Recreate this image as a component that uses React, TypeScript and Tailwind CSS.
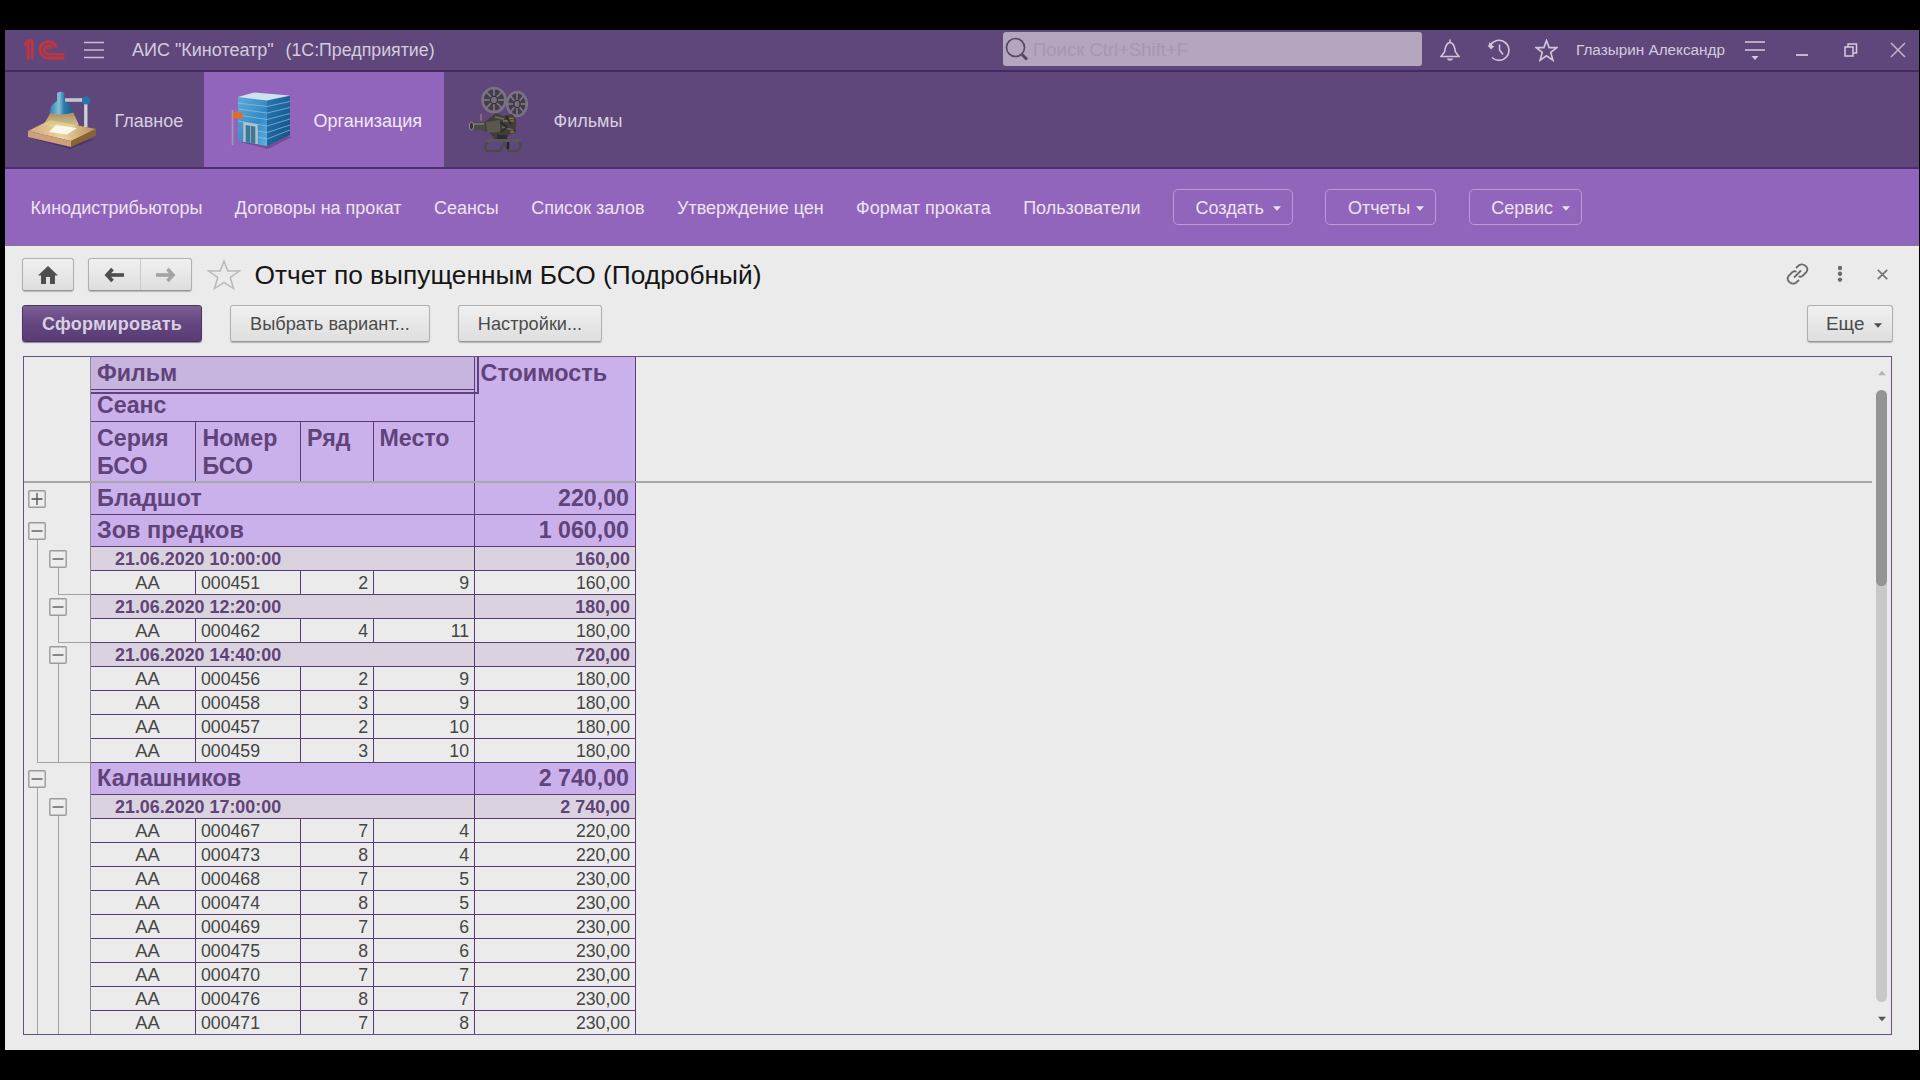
import type { ReactNode } from 'react';

type Row =
  | { kind: 'film'; title: string; sum: string; open: boolean }
  | { kind: 'show'; title: string; sum: string }
  | { kind: 'seat'; num: string; row: string; place: string; sum: string; end?: 'show' | 'film' };

const seat = (num: string, row: string, place: string, sum: string, end?: 'show' | 'film'): Row => ({
  kind: 'seat',
  num,
  row,
  place,
  sum,
  end,
});

const rows: Row[] = [
  { kind: 'film', title: 'Бладшот', sum: '220,00', open: false },
  { kind: 'film', title: 'Зов предков', sum: '1 060,00', open: true },
  { kind: 'show', title: '21.06.2020 10:00:00', sum: '160,00' },
  seat('000451', '2', '9', '160,00', 'show'),
  { kind: 'show', title: '21.06.2020 12:20:00', sum: '180,00' },
  seat('000462', '4', '11', '180,00', 'show'),
  { kind: 'show', title: '21.06.2020 14:40:00', sum: '720,00' },
  seat('000456', '2', '9', '180,00'),
  seat('000458', '3', '9', '180,00'),
  seat('000457', '2', '10', '180,00'),
  seat('000459', '3', '10', '180,00', 'film'),
  { kind: 'film', title: 'Калашников', sum: '2 740,00', open: true },
  { kind: 'show', title: '21.06.2020 17:00:00', sum: '2 740,00' },
  seat('000467', '7', '4', '220,00'),
  seat('000473', '8', '4', '220,00'),
  seat('000468', '7', '5', '230,00'),
  seat('000474', '8', '5', '230,00'),
  seat('000469', '7', '6', '230,00'),
  seat('000475', '8', '6', '230,00'),
  seat('000470', '7', '7', '230,00'),
  seat('000476', '8', '7', '230,00'),
  seat('000471', '7', '8', '230,00'),
];

function Logo() {
  return (
    <svg className="h-[22px] w-[42px]" viewBox="23 39 42 22" fill="none" stroke="#c0363f" strokeWidth="2.8">
      <path d="M24 45 L28.200 41.600 V59.500" />
      <path d="M27.500 40.800 H32.300 V59.500" />
      <path d="M56.300 47.500 A8.300 8.300 0 1 0 48 58 H64.500" />
      <path d="M52.400 48.200 A4.300 4.300 0 1 0 48 54.200 H64.500" strokeWidth="2.4" />
      <path d="M46.600 50.200 a1.800 1.800 0 1 1 3.200 0" strokeWidth="1.2" />
    </svg>
  );
}

function LampIcon() {
  return (
    <svg className="h-[62px] w-[70px]" viewBox="27 88 70 62">
      <defs>
        <linearGradient id="cone" x1="0" y1="0" x2="0" y2="1">
          <stop offset="0" stopColor="#b8975c" />
          <stop offset="1" stopColor="#ecdf9f" />
        </linearGradient>
        <linearGradient id="shade" x1="0" y1="0" x2="1" y2="0">
          <stop offset="0" stopColor="#2b7fad" />
          <stop offset="0.4" stopColor="#86bfd8" />
          <stop offset="0.6" stopColor="#2b7dab" />
          <stop offset="1" stopColor="#185a8a" />
        </linearGradient>
        <linearGradient id="wood" x1="0" y1="0" x2="1" y2="0">
          <stop offset="0" stopColor="#d3a67c" />
          <stop offset="0.5" stopColor="#ecd49c" />
          <stop offset="1" stopColor="#b88d5a" />
        </linearGradient>
      </defs>
      <path d="M30 137 L70 148 L95 138 L70 142Z" fill="#3f2b55" opacity="0.6" />
      <path d="M28 130 L50 119 L96 128 L71 140Z" fill="url(#wood)" />
      <path d="M28 130 L71 140 V146 L28 136Z" fill="#cba07a" />
      <path d="M71 140 L96 128 V134.500 L71 146Z" fill="#8a6335" />
      <path d="M51 111 H73 L79 124 Q62 131 44 123Z" fill="url(#cone)" opacity="0.85" />
      <path d="M49 131 L56 124 L77 127 L67 133.500Z" fill="#f8f8ec" />
      <path d="M65 99 H84" stroke="#c3c3d2" strokeWidth="3.600" />
      <path d="M86 103 V126" stroke="#cfcedb" strokeWidth="3.800" />
      <path d="M87.500 103 V126" stroke="#8e8aa0" strokeWidth="1" />
      <circle cx="86" cy="99.500" r="4" fill="#2577a8" />
      <path d="M57 92 Q61 89.500 64.500 92 V100 Q72 104 73.500 111.500 Q61 115.500 49.500 111.500 Q50 104 57 100Z" fill="url(#shade)" />
    </svg>
  );
}

function BuildingIcon() {
  return (
    <svg className="h-[60px] w-[62px]" viewBox="230 89 62 60">
      <defs>
        <linearGradient id="front" x1="0" y1="0" x2="1" y2="1">
          <stop offset="0" stopColor="#62a9d8" />
          <stop offset="0.6" stopColor="#3489c4" />
          <stop offset="1" stopColor="#64b3de" />
        </linearGradient>
        <linearGradient id="side" x1="0" y1="0" x2="1" y2="1">
          <stop offset="0" stopColor="#2877b2" />
          <stop offset="1" stopColor="#154f83" />
        </linearGradient>
      </defs>
      <path d="M240 141 L268 148 L292 136 L280 134Z" fill="#5b3b80" opacity="0.55" />
      <path d="M238 96 L267 99 V145 L238 140Z" fill="url(#front)" />
      <path d="M267 99 L290 95 V134 L267 145Z" fill="url(#side)" />
      <path d="M238 96 L254 91.500 L290 94.500 L267 99.500Z" fill="#cfe3ee" />
      <g stroke="#8cc8e8" strokeWidth="0.900" fill="none" opacity="0.75">
        <path d="M238 102 L267 105.500 L290 100.500" />
        <path d="M238 108 L267 112 L290 106.500" />
        <path d="M238 114 L267 118.500 L290 112.500" />
        <path d="M238 120 L267 125 L290 118" />
        <path d="M257 130 L267 131.500 L290 124" />
        <path d="M257 136 L267 138 L290 129" />
      </g>
      <path d="M244.500 141 V122.500 L256.500 124.500 V143" fill="#3f7797" stroke="#b3c3cf" strokeWidth="2.400" />
      <path d="M250.500 125 V142" stroke="#86a9bb" strokeWidth="1" />
      <path d="M232.500 109 V144" stroke="#a795b8" strokeWidth="1.600" />
      <path d="M233 111 Q237 109.500 242.500 112 V118 Q238 116.500 233 118Z" fill="#dd6c30" />
    </svg>
  );
}

function Reel({ cx, cy, rx, ry }: { cx: number; cy: number; rx: number; ry: number }) {
  return (
    <g>
      <ellipse cx={cx} cy={cy} rx={rx} ry={ry} fill="#443d48" stroke="#7a7183" strokeWidth="2.6" />
      <g stroke="#7d7586" strokeWidth="1.7">
        <path d={`M${cx - rx} ${cy} H${cx + rx}`} />
        <path d={`M${cx} ${cy - ry} V${cy + ry}`} />
        <path d={`M${cx - rx * 0.7} ${cy - ry * 0.7} L${cx + rx * 0.7} ${cy + ry * 0.7}`} />
        <path d={`M${cx - rx * 0.7} ${cy + ry * 0.7} L${cx + rx * 0.7} ${cy - ry * 0.7}`} />
      </g>
      <ellipse cx={cx} cy={cy} rx={rx * 0.32} ry={ry * 0.32} fill="#77707c" stroke="#2c2830" strokeWidth="1" />
    </g>
  );
}

function ProjectorIcon() {
  return (
    <svg className="h-[68px] w-[62px]" viewBox="468 85 62 68">
      <Reel cx={494} cy={99} rx={11.5} ry={12} />
      <Reel cx={517} cy={103} rx={9.8} ry={12} />
      <path d="M481 113 V120" stroke="#a4728f" strokeWidth="1.400" />
      <path d="M491 116 L496 112 L503 115 L512 113 L516 118 V131 L509 134 L506 138 H494 L491 133 L485 130 V121Z" fill="#403d3a" />
      <path d="M486 121 L500 119 V131 L487 132Z" fill="#59584f" />
      <path d="M471 121.500 L485 120.500 V130 L471 128.500Z" fill="#4c4b47" />
      <path d="M474 123 H484" stroke="#7f7d73" strokeWidth="1.500" />
      <ellipse cx="471.500" cy="125" rx="2.200" ry="4" fill="#35323a" stroke="#a9a3ac" strokeWidth="0.800" />
      <path d="M503 120 H514 M502 126 L513 129 M495 116 L504 118" stroke="#6a6657" strokeWidth="1.800" />
      <path d="M500 121 L507 126 L501 131 M506 115 L511 123" stroke="#29272a" strokeWidth="1.600" fill="none" />
      <path d="M509 117.500 h5 M510 131 h4" stroke="#94702f" strokeWidth="1.400" />
      <path d="M497 134 H507 V139 H497Z" fill="#2d2b2d" />
      <path d="M485 139.500 H521" stroke="#5a5757" strokeWidth="3.200" />
      <path d="M487 141 Q483 147 487 150 H500 L504 142 L509 150 H518 Q523 145 519 141" fill="none" stroke="#4c494d" strokeWidth="2.400" />
      <path d="M508 141 V148" stroke="#242226" strokeWidth="2.400" />
    </svg>
  );
}

function Star({ className, stroke, width }: { className: string; stroke: string; width: number }) {
  return (
    <svg className={className} viewBox="0 0 24 24" preserveAspectRatio="none" fill="none" stroke={stroke} strokeWidth={width}>
      <path d="M12 1.500 L14.700 9 H22.800 L16.400 13.900 L18.700 22.200 L12 17.500 L5.300 22.200 L7.600 13.900 L1.200 9 H9.300 Z" />
    </svg>
  );
}

function TitleBar() {
  return (
    <header className="flex h-[42px] shrink-0 items-center border-b-2 border-[#432a60] pl-[18px] text-[#d5cbdd]">
      <Logo />
      <svg className="ml-[18px] h-[18px] w-[22px]" viewBox="0 0 22 18" stroke="#c9bdd4" strokeWidth="1.700">
        <path d="M1 1.500 H21 M1 9 H21 M1 16.500 H21" />
      </svg>
      <div className="ml-[27px] flex w-[871px] text-[18px]">
        <span className="w-[153.500px]">АИС "Кинотеатр"</span>
        <span className="text-[17.800px]">(1С:Предприятие)</span>
      </div>
      <div className="mb-0.5 flex h-[34px] w-[419px] items-center rounded-[3px] bg-[#b3a6bd] pl-[2px]">
        <svg className="h-[24px] w-[24px]" viewBox="0 0 24 24" fill="none" stroke="#53485e">
          <circle cx="10.500" cy="10.500" r="9" strokeWidth="1.600" />
          <path d="M17 17.500 L22 22.500" strokeWidth="3" />
        </svg>
        <span className="ml-[4px] pt-px text-[18.500px] text-[#a39aaa]">Поиск Ctrl+Shift+F</span>
      </div>
      <svg className="ml-[18px] h-[24px] w-[20px]" viewBox="0 0 20 24" fill="none" stroke="#d0c5d9" strokeWidth="1.600">
        <path d="M1 18.500 H19 L15.500 14 C15 10 14 5 10 4.500 C6 5 5 10 4.500 14 Z M10 4.500 V1.500" />
        <path d="M6.500 20.500 H13.500 L11.500 22.500 H8.500 Z" fill="#d0c5d9" stroke="none" />
      </svg>
      <svg className="ml-[27px] h-[24px] w-[24px]" viewBox="0 0 24 24" fill="none" stroke="#d0c5d9" strokeWidth="1.600">
        <path d="M3.500 7 A10 10 0 1 1 5 19.500 M12.500 6.500 V12 L16 16.500" />
        <path d="M0.500 7.500 L7.500 8 L4 11.500 Z M2.500 4 L6 8 L1.500 8 Z" fill="#d0c5d9" stroke="none" />
      </svg>
      <Star className="ml-[24px] h-[23px] w-[23px]" stroke="#d0c5d9" width={1.7} />
      <span className="ml-[18px] w-[151px] text-[15.300px] whitespace-nowrap">Глазырин Александр</span>
      <svg className="ml-[17px] h-[22px] w-[22px]" viewBox="0 0 22 22" stroke="#d5cbdd" strokeWidth="1.500">
        <path d="M1 3 H21 M1 11 H21" />
        <path d="M7.500 17 H14.500 L11 21 Z" fill="#d5cbdd" stroke="none" />
      </svg>
      <svg className="ml-[29px] h-[22px] w-[14px]" viewBox="0 0 14 22" stroke="#d5cbdd" strokeWidth="1.700">
        <path d="M1 16 H13" />
      </svg>
      <svg className="ml-[34px] h-[16px] w-[16px]" viewBox="0 0 16 16" fill="none" stroke="#d5cbdd" strokeWidth="1.500">
        <path d="M2 5 H10 V14 H2 Z M5 5 V2 H13.500 V11 H10" />
      </svg>
      <svg className="ml-[31px] h-[16px] w-[16px]" viewBox="0 0 16 16" stroke="#c3b5cf" strokeWidth="1.500">
        <path d="M1 1 L15 15 M15 1 L1 15" />
      </svg>
    </header>
  );
}

function Sections() {
  return (
    <nav className="flex h-[97px] shrink-0 border-b-2 border-[#4c2f6d] text-[18px] text-[#d8cfe0]">
      <div className="flex w-[199px] items-center pl-[22px]">
        <LampIcon />
        <span className="mt-[3px] ml-[17.500px]">Главное</span>
      </div>
      <div className="flex w-[240px] items-center bg-[#9165bb] pl-[26px] text-[#efe8f5]">
        <BuildingIcon />
        <span className="mt-[3px] ml-[21.500px]">Организация</span>
      </div>
      <div className="flex items-center pl-[24px]">
        <ProjectorIcon />
        <span className="mt-[3px] ml-[23.500px]">Фильмы</span>
      </div>
    </nav>
  );
}

function Caret({ className }: { className: string }) {
  return (
    <svg className={className} viewBox="0 0 8 5" fill="currentColor">
      <path d="M0 0.300 H8 L4 4.800 Z" />
    </svg>
  );
}

const links = ['Кинодистрибьюторы', 'Договоры на прокат', 'Сеансы', 'Список залов', 'Утверждение цен', 'Формат проката', 'Пользователи'];

const menus = [
  { title: 'Создать', width: 'w-[120px]' },
  { title: 'Отчеты', width: 'w-[111px]' },
  { title: 'Сервис', width: 'w-[113px]' },
];

function SubNav() {
  return (
    <nav className="flex h-[77px] shrink-0 items-center gap-[32.400px] border-b border-[#86779a] bg-[#9165bb] pl-[25.600px] text-[18px] text-[#ece3f3]">
      {links.map((l) => (
        <span key={l} className="pt-[2px]">
          {l}
        </span>
      ))}
      {menus.map(({ title, width }) => (
        <div
          key={title}
          className={`${width} flex h-[36px] items-center justify-between rounded-[5px] border-[1.500px] border-[#bb9cd8] pt-[2px] pr-[11px] pl-[21.500px]`}
        >
          {title}
          <Caret className="h-[5px] w-[8px]" />
        </div>
      ))}
    </nav>
  );
}

function Button({ className, children }: { className: string; children: ReactNode }) {
  return (
    <div
      className={`${className} flex items-center rounded-[3px] border border-[#b0b0b0] border-b-[#979797] bg-linear-to-b from-[#f0f0f0] to-[#dedede] shadow-[0_1px_1px_#b5b5b5]`}
    >
      {children}
    </div>
  );
}

function Arrow({ className }: { className: string }) {
  return (
    <svg className={className} viewBox="0 0 20 16" fill="none" stroke="currentColor">
      <path d="M3 8 H20" strokeWidth="3.600" />
      <path d="M8.500 2 L3 8 L8.500 14" strokeWidth="3.600" />
    </svg>
  );
}

function Toolbar() {
  return (
    <>
      <div className="mt-[11px] flex h-[35px] shrink-0 items-center pl-[17px]">
        <Button className="h-[33px] w-[52px] justify-center">
          <svg className="h-[18px] w-[20px]" viewBox="0 0 20 18" fill="#4e4e4e">
            <path d="M10 0 L20 9.500 H17 V18 H12 V11 H8 V18 H3 V9.500 H0 Z" />
          </svg>
        </Button>
        <Button className="ml-[14px] h-[33px] w-[104px]">
          <div className="flex h-full flex-1 items-center justify-center border-r border-[#c9c9c9]">
            <Arrow className="h-[16px] w-[20px] text-[#4e4e4e]" />
          </div>
          <div className="flex flex-1 justify-center">
            <Arrow className="h-[16px] w-[20px] -scale-x-100 text-[#a3a3a3]" />
          </div>
        </Button>
        <Star className="ml-[15px] h-[32px] w-[34px]" stroke="#b9b9b9" width={1.1} />
        <h1 className="ml-[13.500px] pt-[2px] text-[26.330px] text-[#161616]">Отчет по выпущенным БСО (Подробный)</h1>
        <svg className="mb-px ml-auto h-[22px] w-[23px]" viewBox="0 0 23 22" fill="none" stroke="#6a6a6a" strokeWidth="1.800">
          <path d="M10 5 L13 2.300 C17 -0.500 23.500 4 20.500 9 L16.500 13 C15 14 13.500 13.800 12.500 13.300" />
          <path d="M13 17 L10 19.700 C6 22.500 -0.500 18 2.500 13 L6.500 9 C8 8 9.500 8.200 10.500 8.700" />
          <path d="M8 14.500 L15 7.500" />
        </svg>
        <svg className="mb-px ml-[28px] h-[18px] w-[6px]" viewBox="0 0 6 18" fill="#6a6a6a">
          <circle cx="3" cy="3" r="2.200" />
          <circle cx="3" cy="8.800" r="2.200" />
          <circle cx="3" cy="14.600" r="2.200" />
        </svg>
        <svg className="mr-[31.500px] mb-px ml-[33.500px] h-[11px] w-[11px]" viewBox="0 0 11 11" stroke="#757575" strokeWidth="1.700">
          <path d="M0.800 0.800 L10.200 10.200 M10.200 0.800 L0.800 10.200" />
        </svg>
      </div>
      <div className="mt-[13px] flex h-[37px] shrink-0 items-center pr-[26px] pl-[17px] text-[18.200px] text-[#4b4b4b]">
        <div className="flex h-[37px] w-[180px] items-center justify-center rounded-[3px] border border-[#4a3462] bg-linear-to-b from-[#7a5f93] via-[#644681] to-[#593c74] pt-[2px] text-[18px] font-bold tracking-[0.260px] text-[#d9cfe2] shadow-[0_1px_1px_#8b8194]">
          Сформировать
        </div>
        <Button className="ml-[28px] h-[37px] w-[200px] justify-center pt-[2px]">Выбрать вариант...</Button>
        <Button className="ml-[28px] h-[37px] w-[144px] justify-center pt-[2px]">Настройки...</Button>
        <Button className="ml-auto h-[37px] w-[86px] justify-between pt-[2px] pr-[10px] pl-[18px] text-[18.900px]">
          Еще
          <Caret className="mt-px h-[5px] w-[8px]" />
        </Button>
      </div>
    </>
  );
}

function Toggle({ open, className }: { open: boolean; className: string }) {
  return (
    <svg className={`${className} absolute h-[18px] w-[18px]`} viewBox="0 0 18 18">
      <rect x="0.800" y="0.800" width="16.400" height="16.400" rx="1" fill="#ededed" stroke="#9b9b9b" strokeWidth="1.400" />
      <path d={open ? 'M3.500 9 H14.500' : 'M3.500 9 H14.500 M9 3 V15'} stroke="#4f4f4f" strokeWidth="1.300" />
    </svg>
  );
}

function Gutter({ row }: { row: Row }) {
  const endFilm = row.kind === 'seat' && row.end === 'film';
  const endShow = row.kind === 'seat' && row.end !== undefined;
  const filmLine = row.kind !== 'film' || row.open;
  return (
    <div className="relative flex w-[67px] shrink-0 items-end border-r border-[#8d8a92] pl-[13px]">
      <div
        className={`w-[21px] border-[#a3a3a3] ${row.kind === 'film' ? 'h-1/2' : 'h-full'} ${filmLine ? 'border-l' : ''} ${endFilm ? 'border-b' : ''}`}
      />
      <div
        className={`w-[32px] border-[#a3a3a3] ${row.kind === 'show' ? 'h-1/2' : 'h-full'} ${row.kind !== 'film' ? 'border-l' : ''} ${endShow ? 'border-b' : ''}`}
      />
      {row.kind === 'film' && <Toggle open={row.open} className="top-[7px] left-[4px]" />}
      {row.kind === 'show' && <Toggle open className="top-[3px] left-[25px]" />}
    </div>
  );
}

function ReportRow({ row }: { row: Row }) {
  if (row.kind === 'film') {
    return (
      <div className="flex h-[32px]">
        <Gutter row={row} />
        <div className="flex w-[545px] border-b border-[#583c73] bg-[#cab1ec] text-[23.200px] leading-[31px] font-bold text-[#5f4379]">
          <div className="w-[384px] border-r border-[#583c73] pl-[6px] text-[23.500px]">{row.title}</div>
          <div className="w-[161px] border-r border-[#583c73] pr-[6px] text-right">{row.sum}</div>
        </div>
      </div>
    );
  }
  if (row.kind === 'show') {
    return (
      <div className="flex h-[24px]">
        <Gutter row={row} />
        <div className="flex w-[545px] border-b border-[#583c73] bg-[#dad3df] text-[17.900px] leading-[24px] font-bold text-[#5f4379]">
          <div className="w-[384px] border-r border-[#583c73] pl-[24px]">{row.title}</div>
          <div className="w-[161px] border-r border-[#583c73] pr-[5px] text-right">{row.sum}</div>
        </div>
      </div>
    );
  }
  return (
    <div className="flex h-[24px]">
      <Gutter row={row} />
      <div className="flex w-[545px] border-b border-[#583c73] text-[17.700px] leading-[24px] text-[#454545]">
        <div className="w-[105px] border-r border-[#583c73] pl-[9px] text-center text-[18.400px] leading-[23px]">АА</div>
        <div className="w-[105px] border-r border-[#583c73] pl-[5px]">{row.num}</div>
        <div className="w-[73px] border-r border-[#583c73] pr-[5px] text-right">{row.row}</div>
        <div className="w-[101px] border-r border-[#583c73] pr-[5px] text-right">{row.place}</div>
        <div className="w-[161px] border-r border-[#583c73] pr-[5px] text-right">{row.sum}</div>
      </div>
    </div>
  );
}

function ReportHeader() {
  return (
    <div className="flex h-[126px] w-[1848px] border-b-2 border-[#a9a7ab]">
      <div className="w-[67px] border-r border-[#8d8a92]" />
      <div className="flex w-[545px] bg-[#cab1ec] text-[23.200px] leading-[28px] font-bold text-[#5f4379]">
        <div className="flex w-[384px] flex-col border-r border-[#583c73]">
          <div className="relative h-[33px] border-b border-[#583c73] bg-[#c7b4df] pt-[2px] pl-[6px]">
            Фильм
            <div className="absolute -top-px left-0 h-[38px] w-[388px] border-r-2 border-b-2 border-[#5f4379]" />
          </div>
          <div className="h-[32px] border-b border-[#583c73] pt-px pl-[6px]">Сеанс</div>
          <div className="flex flex-1">
            <div className="w-[105px] border-r border-[#583c73] pt-[2px] pl-[6px]">
              Серия
              <br />
              БСО
            </div>
            <div className="w-[105px] border-r border-[#583c73] pt-[2px] pl-[6.500px]">
              Номер
              <br />
              БСО
            </div>
            <div className="w-[73px] border-r border-[#583c73] pt-[2px] pl-[6px]">Ряд</div>
            <div className="pt-[2px] pl-[5.500px]">Место</div>
          </div>
        </div>
        <div className="w-[161px] border-r border-[#583c73] pt-[2px] pl-[5.500px] text-[23.400px]">Стоимость</div>
      </div>
    </div>
  );
}

function Report() {
  return (
    <div className="mt-[14px] ml-[18px] flex h-[679px] w-[1869px] shrink-0 justify-between border border-[#65507f]">
      <div className="h-full overflow-hidden">
        <ReportHeader />
        {rows.map((r, i) => (
          <ReportRow key={i} row={r} />
        ))}
      </div>
      <div className="mr-[4px] flex w-[11px] flex-col items-center">
        <Caret className="mt-[13px] h-[6px] w-[8px] rotate-180 text-[#b4b4b4]" />
        <div className="mt-[14px] h-[612px] w-[11px] rounded-full bg-[#c8c8c8]">
          <div className="h-[196px] rounded-full bg-[#949494]" />
        </div>
        <Caret className="mt-[14px] h-[6px] w-[8px] text-[#555]" />
      </div>
    </div>
  );
}

export default function App() {
  return (
    <div className="h-[1080px] w-[1920px] overflow-hidden bg-black pt-[30px] pl-[5px] font-['Liberation_Sans',sans-serif]">
      <div className="flex h-[1020px] w-[1914px] flex-col overflow-hidden bg-[#60477b]">
        <TitleBar />
        <Sections />
        <SubNav />
        <main className="flex flex-1 flex-col bg-[#ebebeb]">
          <Toolbar />
          <Report />
        </main>
      </div>
    </div>
  );
}
